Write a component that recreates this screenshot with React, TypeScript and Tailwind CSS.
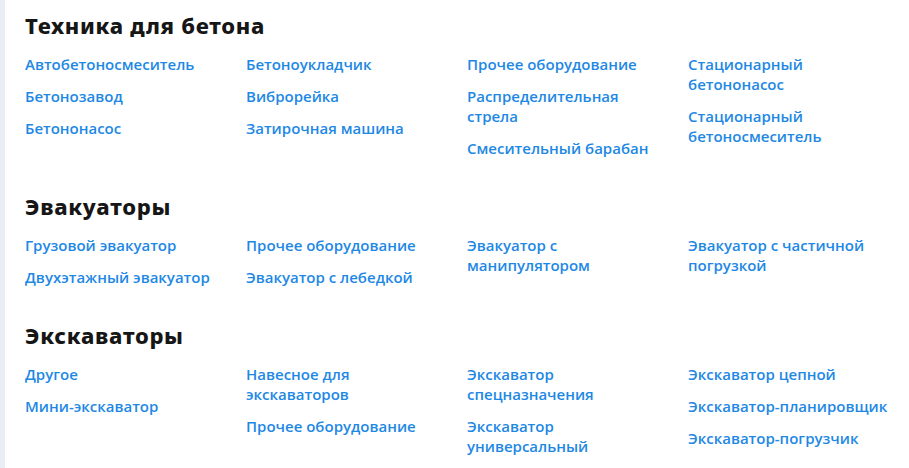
import React from 'react';

type Section = { title: string; columns: string[][] };

const sections: Section[] = [
  {
    title: 'Техника для бетона',
    columns: [
      ['Автобетоносмеситель', 'Бетонозавод', 'Бетононасос'],
      ['Бетоноукладчик', 'Виброрейка', 'Затирочная машина'],
      ['Прочее оборудование', 'Распределительная стрела', 'Смесительный барабан'],
      ['Стационарный бетононасос', 'Стационарный бетоносмеситель'],
    ],
  },
  {
    title: 'Эвакуаторы',
    columns: [
      ['Грузовой эвакуатор', 'Двухэтажный эвакуатор'],
      ['Прочее оборудование', 'Эвакуатор с лебедкой'],
      ['Эвакуатор с манипулятором'],
      ['Эвакуатор с частичной погрузкой'],
    ],
  },
  {
    title: 'Экскаваторы',
    columns: [
      ['Другое', 'Мини-экскаватор'],
      ['Навесное для экскаваторов', 'Прочее оборудование'],
      ['Экскаватор спецназначения', 'Экскаватор универсальный'],
      ['Экскаватор цепной', 'Экскаватор-планировщик', 'Экскаватор-погрузчик'],
    ],
  },
];

const App: React.FC = () => {
  return (
    <div className="flex min-h-[468px] bg-white">
      <div className="w-[5px] shrink-0 bg-[#e9eef6]" />
      <div className="flex-1 pl-5 pr-4 pt-[11px] flex flex-col gap-[34px]">
        {sections.map((s) => (
          <section key={s.title}>
            <h2 className="text-[22px] leading-[28px] font-extrabold text-[#161616] mb-[15px] font-['Noto_Sans',sans-serif] tracking-[0.7px]">
              {s.title}
            </h2>
            <div className="grid grid-cols-4 gap-x-4">
              {s.columns.map((col, i) => (
                <ul key={i} className="flex flex-col gap-3">
                  {col.map((item) => (
                    <li key={item}>
                      <a
                        href="#"
                        className="text-[15px] leading-5 font-semibold text-[#1e88e5] font-['Open_Sans',sans-serif] block"
                      >
                        {item}
                      </a>
                    </li>
                  ))}
                </ul>
              ))}
            </div>
          </section>
        ))}
      </div>
    </div>
  );
};

export default App;
